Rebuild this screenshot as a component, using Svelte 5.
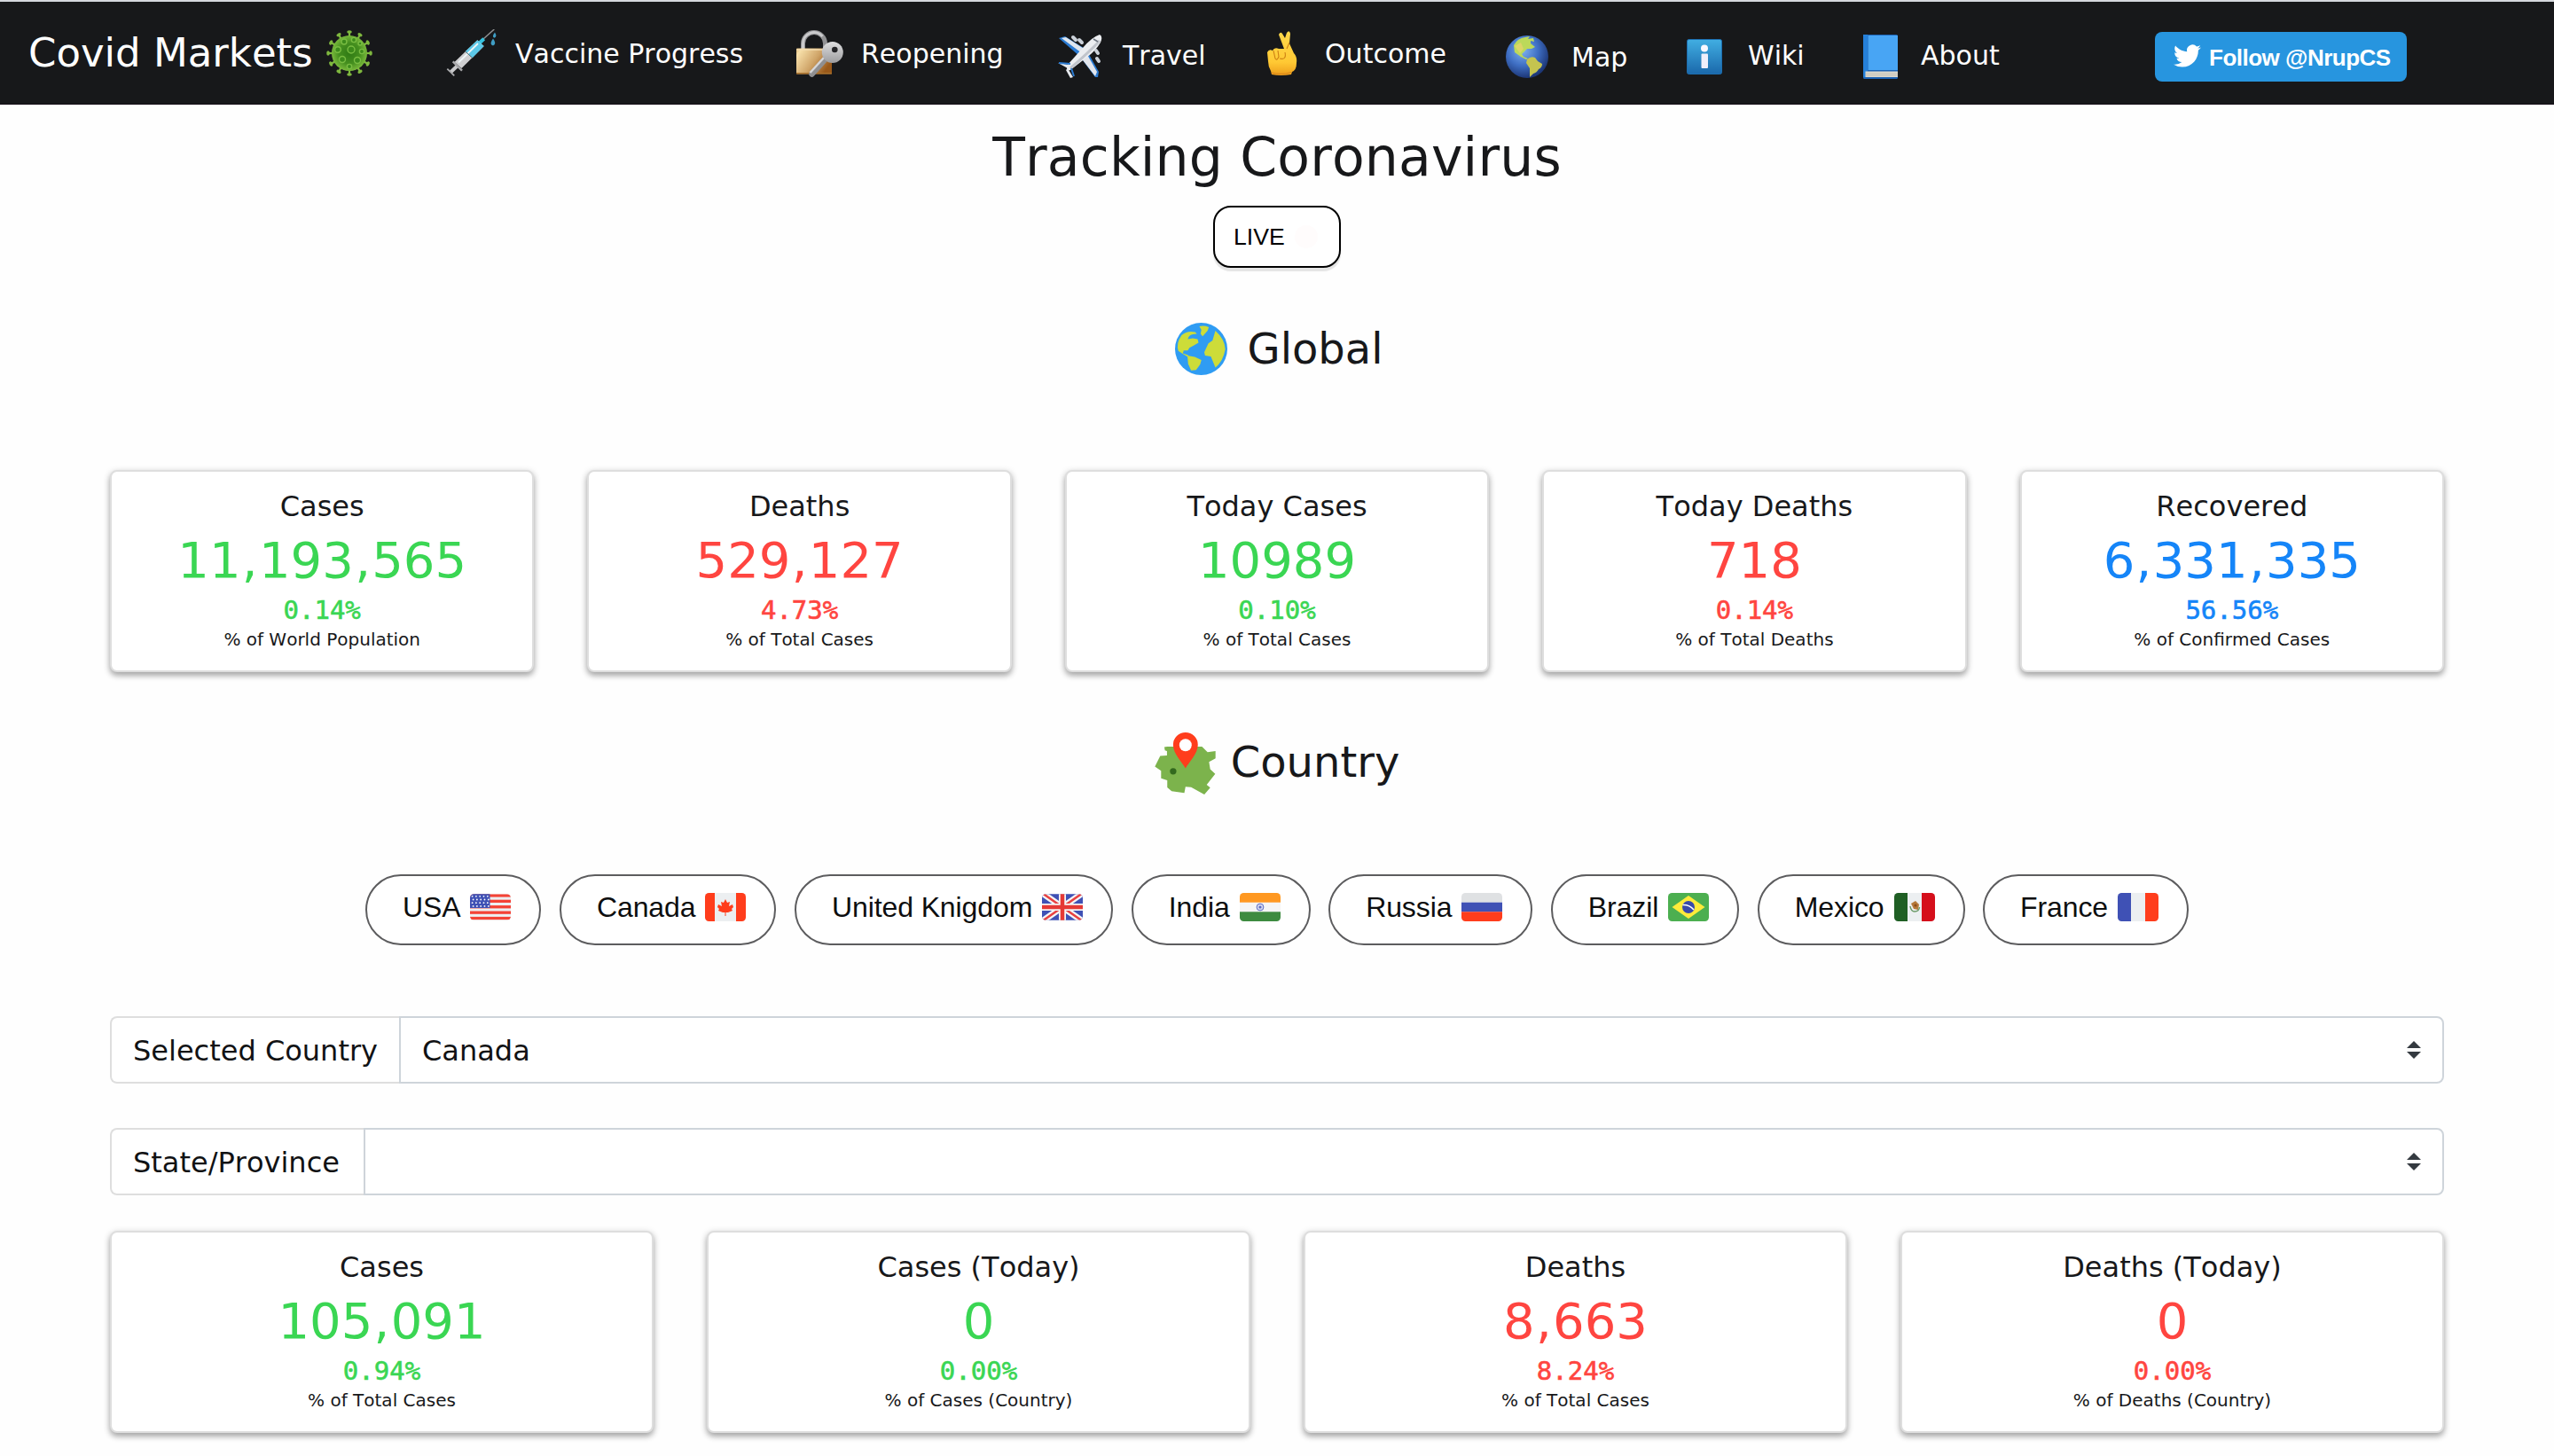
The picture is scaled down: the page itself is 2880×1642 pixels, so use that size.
<script>
  const globalStats = [
    { title: 'Cases', value: '11,193,565', pct: '0.14%', note: '% of World Population', tone: 'green' },
    { title: 'Deaths', value: '529,127', pct: '4.73%', note: '% of Total Cases', tone: 'red' },
    { title: 'Today Cases', value: '10989', pct: '0.10%', note: '% of Total Cases', tone: 'green' },
    { title: 'Today Deaths', value: '718', pct: '0.14%', note: '% of Total Deaths', tone: 'red' },
    { title: 'Recovered', value: '6,331,335', pct: '56.56%', note: '% of Confirmed Cases', tone: 'blue' }
  ];
  const countryStats = [
    { title: 'Cases', value: '105,091', pct: '0.94%', note: '% of Total Cases', tone: 'green' },
    { title: 'Cases (Today)', value: '0', pct: '0.00%', note: '% of Cases (Country)', tone: 'green' },
    { title: 'Deaths', value: '8,663', pct: '8.24%', note: '% of Total Cases', tone: 'red' },
    { title: 'Deaths (Today)', value: '0', pct: '0.00%', note: '% of Deaths (Country)', tone: 'red' }
  ];
  const countries = [
    { name: 'USA', code: 'us' },
    { name: 'Canada', code: 'ca' },
    { name: 'United Knigdom', code: 'gb' },
    { name: 'India', code: 'in' },
    { name: 'Russia', code: 'ru' },
    { name: 'Brazil', code: 'br' },
    { name: 'Mexico', code: 'mx' },
    { name: 'France', code: 'fr' }
  ];
  const nav = [
    { label: 'Vaccine Progress', id: 'vaccine' },
    { label: 'Reopening', id: 'reopening' },
    { label: 'Travel', id: 'travel' },
    { label: 'Outcome', id: 'outcome' },
    { label: 'Map', id: 'map' },
    { label: 'Wiki', id: 'wiki' },
    { label: 'About', id: 'about' }
  ];
  const spikes = Array.from({ length: 12 }, (_, i) => i * 30);
  const selects = [
    { label: 'Selected Country', value: 'Canada', id: 'nation' },
    { label: 'State/Province', value: '', id: 'state' }
  ];
</script>

{#snippet card(s)}
  <article class="card">
    <h3>{s.title}</h3>
    <div class="value {s.tone}">{#each s.value.split(',') as part, i}{#if i > 0}<span class="comma">,</span>{/if}{part}{/each}</div>
    <div class="pct {s.tone}">{s.pct}</div>
    <div class="note">{s.note}</div>
  </article>
{/snippet}

{#snippet navIcon(id)}
  {#if id === 'vaccine'}
    <svg class="icon" viewBox="0 0 57 53">
      <path d="M42 11 L54.300 0" stroke="#8f9092" stroke-width="1.500" />
      <path d="M36 17 L42.700 10.700" stroke="#35c3e0" stroke-width="4" />
      <path d="M35.300 12.300 L42.700 19 L17.500 44 L9.500 37 Z" fill="#cfcfd1" />
      <path d="M35.300 12.300 L42.700 19 L29.700 32.300 L21.700 25 Z" fill="#5cc8e8" />
      <path d="M36 16 L14 37.500" stroke="#eef5f7" stroke-width="1.800" />
      <path d="M21.700 25 L29.700 32.300" stroke="#54656b" stroke-width="1" />
      <path d="M7.700 36.300 L18 46.700" stroke="#a9a9ac" stroke-width="2.400" />
      <path d="M12 42 L5.300 48.300" stroke="#c9c9cb" stroke-width="4" />
      <path d="M1.300 44.700 L9.300 52.300" stroke="#a9a9ac" stroke-width="1.800" />
      <path d="M55 3.500 q3 5 -.5 6.200 q-3.500 -1 .5 -6.200 M53 10.500 q4.500 6 0 8 q-5 -1.500 0 -8" fill="#3f9dc4" />
    </svg>
  {:else if id === 'reopening'}
    <svg class="icon" viewBox="0 0 53 53">
      <defs>
        <linearGradient id="lockBody" x1="0" x2="1" y1="0" y2=".5">
          <stop offset="0" stop-color="#d9b26f" /><stop offset=".12" stop-color="#f7dfa9" /><stop offset=".6" stop-color="#cfa468" /><stop offset="1" stop-color="#99591a" />
        </linearGradient>
        <linearGradient id="keyHead" x1="0" x2="0" y1="0" y2="1">
          <stop offset="0" stop-color="#dededf" /><stop offset="1" stop-color="#9d9d9f" />
        </linearGradient>
      </defs>
      <path d="M7.500 24 V15 a12.500 12.500 0 0 1 25 0 V22" fill="none" stroke="#929294" stroke-width="5" />
      <path d="M7.500 24 V15 a12.500 12.500 0 0 1 22 -8" fill="none" stroke="#cacacc" stroke-width="3" />
      <rect y="20.500" width="40" height="29" rx="1" fill="url(#lockBody)" />
      <rect y="21" width="34" height="2" fill="#f3ddb0" opacity=".7" />
      <rect y="48" width="40" height="1.500" fill="#a9712c" />
      <path d="M34 31 L17.500 49.500" stroke="#8f8f91" stroke-width="6.500" stroke-linecap="round" />
      <path d="M31 31 L15.500 48" stroke="#d6d6d8" stroke-width="2.500" />
      <circle cx="40.800" cy="25" r="12" fill="url(#keyHead)" />
      <circle cx="43.300" cy="22" r="3.300" fill="#242427" />
    </svg>
  {:else if id === 'travel'}
    <svg class="icon" viewBox="0 0 50 50">
      <path d="M1 5 L8 3 L32 18 L24 25 Z" fill="#2b7bd2" />
      <path d="M4 5 L9 4 L31 18 L27 22 Z" fill="#dfe6ee" />
      <path d="M32 18 L46 43 L45 49 L42 49 L25 26 Z" fill="#2b7bd2" />
      <path d="M31 20 L44 43 L42 48 L25 26 Z" fill="#e3e6ec" />
      <path d="M47 1 Q51 3 48 10 Q42 20 32 27 L14 41 Q9 42 10 36 L28 16 Q38 4 47 1 Z" fill="#eceef1" />
      <path d="M47 8 Q37 19 14 39" stroke="#c1c5cc" stroke-width="3" fill="none" />
      <path d="M0 33 L13 35 L11 39 Z M11 39 L17 49 L14 50 L9 41 Z" fill="#e6e9ee" />
      <path d="M1 33 L14 34 M15 39 L18 48" stroke="#2b7bd2" stroke-width="2" />
      <path d="M17 4 L20 7 M24 7 L27 10 M43 19 L45 22 M44 28 L46 31" stroke="#cbd1d9" stroke-width="4" stroke-linecap="round" />
      <path d="M40 6 L45 9" stroke="#6b737e" stroke-width="1.500" />
    </svg>
  {:else if id === 'outcome'}
    <svg class="icon" viewBox="0 0 34 50">
      <defs>
        <linearGradient id="hand" x1="0" x2="0" y1="0" y2="1">
          <stop offset="0" stop-color="#ffd84a" /><stop offset=".7" stop-color="#ffc934" /><stop offset="1" stop-color="#ee9e1b" />
        </linearGradient>
      </defs>
      <path d="M13 4 Q15 0 17 3 L20 8 L22 2 Q25 -2 26 3 L25 14 L30 25 Q34 29 33 36 Q33 44 28 46 L27 49 Q15 51 5 49 L4 45 Q1 40 1 34 L0 24 Q2 20 6 22 Q8 18 13 20 L19 20 Z" fill="url(#hand)" />
      <path d="M7 22 L9 31 Q11 34 13 29 L12 22 M14 31 Q22 33 20 24 M25 13 L22 20" stroke="#cc7f12" stroke-width="1.100" fill="none" />
      <path d="M5 47 Q16 50 27 46.500" stroke="#d9851a" stroke-width="1.200" fill="none" />
    </svg>
  {:else if id === 'map'}
    <svg class="icon" viewBox="0 0 48 48">
      <defs>
        <radialGradient id="sea" cx=".4" cy=".35" r=".65">
          <stop offset="0" stop-color="#7fb1ef" /><stop offset=".55" stop-color="#3f6fc4" /><stop offset="1" stop-color="#1d3777" />
        </radialGradient>
      </defs>
      <circle cx="24" cy="24" r="24" fill="url(#sea)" />
      <path d="M9 11 Q13 3 22 2 L27 1 L25 4 L31 3 L32 7 L28 6 L28 9 L33 13 L29 15 L24 15 L20 19 L18 21 L20 24 L25 26 L23 27 L17 24 L10 19 Z" fill="#bcd95a" />
      <path d="M24 27 Q28 23 33 25 L36 29 L41 32 Q41 36 37 38 Q35 42 31 43 L27 47 L27 37 L23 31 Z" fill="#c5c44f" />
      <path d="M10 12 L17 8 L20 15 L16 20 Z" fill="#dcd568" />
    </svg>
  {:else if id === 'wiki'}
    <svg class="icon" viewBox="0 0 40 40">
      <defs>
        <linearGradient id="info" x1="0" x2="0" y1="0" y2="1">
          <stop offset="0" stop-color="#41aee2" /><stop offset="1" stop-color="#1a68ab" />
        </linearGradient>
      </defs>
      <rect x=".5" y=".5" width="39" height="39" rx="2" fill="url(#info)" stroke="#1c6eb0" />
      <circle cx="20" cy="10.500" r="4" fill="#f8f8ff" />
      <rect x="16.500" y="16.500" width="7.500" height="16.500" rx="1" fill="#efeffa" />
    </svg>
  {:else}
    <svg class="icon" viewBox="0 0 39 50">
      <rect width="39" height="50" rx="1.500" fill="#1c63b5" />
      <rect x="0" y="0" width="5" height="48" fill="#2580da" />
      <rect x="5.500" y="1" width="33.500" height="39" fill="#48a5f4" />
      <rect x="2.500" y="41.500" width="36.500" height="6.500" fill="#dcd8cc" />
      <path d="M3 44 H39 M3 46 H39" stroke="#bdb9ae" stroke-width=".6" />
    </svg>
  {/if}
{/snippet}

{#snippet flag(code)}
  <svg class="flag" viewBox="0 0 46 32">
    <defs><clipPath id="clip-{code}"><rect y={code === 'us' || code === 'gb' ? 1.3 : 0} width="46" height={code === 'us' || code === 'gb' ? 29.4 : 32} rx="4.500" /></clipPath></defs>
    <g clip-path="url(#clip-{code})">
      {#if code === 'us'}
        <rect width="46" height="32" fill="#eceff1" />
        {#each [0, 1, 2, 3, 4] as i}
          <rect y={1.3 + i * 6.4} width="46" height="3.300" fill="#f44336" />
        {/each}
        <rect width="22.500" height="17" fill="#3f51b5" />
        {#each [0, 1, 2, 3] as r}
          {#each [0, 1, 2, 3, 4] as c}
            <circle cx={2.6 + c * 4.3 + (r % 2)} cy={3.8 + r * 3.7} r=".9" fill="#fff" />
          {/each}
        {/each}
      {:else if code === 'ca'}
        <rect width="46" height="32" fill="#eceff1" />
        <rect width="11" height="32" fill="#ff3d1c" /><rect x="35" width="11" height="32" fill="#ff3d1c" />
        <path d="M23 7 L25 11 L28 10 L27 15 L31 13 L32 16 L30 18 L31 20 L26 22 L23.500 22 L23.500 26 L22.500 26 L22.500 22 L20 22 L15 20 L16 18 L14 16 L15 13 L19 15 L18 10 L21 11 Z" fill="#ff3d1c" />
      {:else if code === 'gb'}
        <rect width="46" height="32" fill="#3f51b5" />
        <path d="M0 0 L46 32 M46 0 L0 32" stroke="#f5f5f5" stroke-width="7" />
        <path d="M0 0 L46 32 M46 0 L0 32" stroke="#e84040" stroke-width="2.500" />
        <path d="M23 0 V32 M0 16 H46" stroke="#f5f5f5" stroke-width="8" />
        <path d="M23 0 V32 M0 16 H46" stroke="#e53935" stroke-width="4.500" />
      {:else if code === 'in'}
        <rect width="46" height="32" fill="#f5f5f5" />
        <rect width="46" height="10.700" fill="#ff9821" /><rect y="21.300" width="46" height="10.700" fill="#3d8b40" />
        <circle cx="23" cy="16" r="3.900" fill="#d7daf0" stroke="#5c6bc0" stroke-width="1" /><circle cx="23" cy="16" r="1.600" fill="#5c6bc0" />
      {:else if code === 'ru'}
        <rect width="46" height="10.700" fill="#dfe1e3" /><rect y="10.700" width="46" height="10.700" fill="#3f51b5" /><rect y="21.300" width="46" height="10.700" fill="#ff3d1c" />
      {:else if code === 'br'}
        <rect width="46" height="32" fill="#4caf50" />
        <path d="M23 3 L41.500 16 L23 29 L4.500 16 Z" fill="#ffeb3b" />
        <circle cx="23" cy="16" r="7" fill="#3949ab" />
        <path d="M16.500 13.500 Q24 13 29 19" fill="none" stroke="#fff" stroke-width="1.500" />
      {:else if code === 'mx'}
        <rect width="46" height="32" fill="#eceff1" />
        <rect width="15" height="32" fill="#1f5f24" /><rect x="31" width="15" height="32" fill="#d50f1b" />
        <path d="M19 12 L24 9 L28 13 L27 19 L22 18 Z" fill="#b5793a" />
        <path d="M18 15 Q19 21 23 21 Q28 21 28.500 16" fill="none" stroke="#6c9a67" stroke-width="1.500" />
        <circle cx="24" cy="14" r="1.600" fill="#8c4c1c" />
      {:else}
        <rect width="46" height="32" fill="#eceff1" />
        <rect width="15" height="32" fill="#3f51b5" /><rect x="31" width="15" height="32" fill="#ff3d1c" />
      {/if}
    </g>
  </svg>
{/snippet}

<div class="page">
  <header>
    <div class="brand">
      <span>Covid Markets</span>
      <svg class="virus" viewBox="-26 -26 52 52">
        <defs>
          <radialGradient id="virusBody"><stop offset="0" stop-color="#2f7a14" /><stop offset=".6" stop-color="#458f1f" /><stop offset="1" stop-color="#79b83c" /></radialGradient>
        </defs>
        {#each spikes as a}
          <g transform="rotate({a})">
            <path d="M0 -18 V-24" stroke="#7fb83f" stroke-width="2.200" />
            <ellipse cy="-24" rx="2.800" ry="1.800" fill="#7fb83f" />
          </g>
        {/each}
        <circle r="20" fill="url(#virusBody)" />
        <g fill="#3c8a1b" stroke="#79bd42" stroke-width="1.400">
          <circle cx="2" cy="-4" r="4" /><circle cx="-13" cy="-4" r="3.300" /><circle cx="-8" cy="7" r="3.500" />
          <circle cx="9" cy="8" r="3.500" /><circle cx="14" cy="-2" r="2.600" /><circle cx="-6" cy="-13" r="3" />
          <circle cx="5" cy="-15" r="2.600" /><circle cx="12" cy="-11" r="2" /><circle cx="0" cy="15" r="2.600" />
        </g>
      </svg>
    </div>
    <nav>
      {#each nav as item}
        <a class="item {item.id}" href="#{item.id}">{@render navIcon(item.id)}<span>{item.label}</span></a>
      {/each}
    </nav>
    <a class="follow" href="#follow">
      <svg viewBox="0 2 24 20"><path fill="#fff" d="M23.950 4.570a10 10 0 0 1-2.820.770 4.960 4.960 0 0 0 2.160-2.720c-.95.550-2 .950-3.130 1.180a4.920 4.920 0 0 0-8.380 4.480C7.690 8.100 4.070 6.130 1.640 3.160a4.820 4.820 0 0 0-.67 2.480c0 1.710.870 3.210 2.190 4.100a4.900 4.900 0 0 1-2.230-.62v.06a4.920 4.920 0 0 0 3.950 4.830 5 5 0 0 1-2.210.080 4.940 4.940 0 0 0 4.600 3.420A9.870 9.870 0 0 1 0 19.540a13.990 13.990 0 0 0 7.550 2.210c9.050 0 14-7.500 14-13.980 0-.21 0-.42-.02-.63a9.940 9.940 0 0 0 2.460-2.550z" /></svg>
      <span>Follow @NrupCS</span>
    </a>
  </header>

  <main>
    <h1>Tracking Coronavirus</h1>
    <button class="live"><span>LIVE</span><i></i></button>

    <h2 class="global">
      <svg viewBox="535 730 127 178" preserveAspectRatio="none">
        <ellipse cx="598.500" cy="819" rx="63.500" ry="89" fill="#2f9cf3" />
        <path d="M551 772 Q566 755 584 762 L588 768 Q574 768 568 778 L566 786 L578 783 L590 786 L592 798 L580 808 L570 815 L566 824 L556 824 L554 834 L567 840 L566 846 Q552 835 543 826 Q537 800 551 772 Z" fill="#cddc39" />
        <path d="M594 742 Q606 738 617 745 L614 757 L602 776 L597 768 L599 754 Z" fill="#cddc39" />
        <path d="M565 842 L583 846 L599 857 L596 872 L586 891 L574 892 L567 870 Z" fill="#cddc39" />
        <path d="M633 757 Q656 786 657 820 Q652 862 633 882 L622 845 L608 842 L606 830 L616 800 L626 790 Z" fill="#cddc39" />
      </svg>
      <span>Global</span>
    </h2>

    <section class="cards">
      {#each globalStats as s}{@render card(s)}{/each}
    </section>

    <h2 class="country">
      <svg viewBox="123 77 206 211">
        <path fill="#7cb34c" d="M155 127 L165 125 H283 L302 144 L329 140 V165 L307 177 L311 202 L328 218 L299 255 L311 265 L291 288 L246 263 L227 262 L223 283 L180 277 L165 264 V240 L144 233 V207 L123 193 L141 157 L164 155 V140 L157 138 Z" />
        <circle cx="185" cy="209" r="11" fill="#33691e" />
        <path fill="#ff3d1c" d="M227 77 a42 42 0 0 1 42 42 C269 150 238 178 227 199 C216 178 185 150 185 119 a42 42 0 0 1 42 -42 Z" />
        <circle cx="227" cy="120" r="21" fill="#fff" />
      </svg>
      <span>Country</span>
    </h2>

    <div class="pills">
      {#each countries as c}
        <button class="pill {c.code}"><span>{c.name}</span>{@render flag(c.code)}</button>
      {/each}
    </div>

    {#each selects as s}
      <div class="select {s.id}">
        <div class="label">{s.label}</div>
        <div class="field">
          <span>{s.value}</span>
          <svg viewBox="0 0 16 20"><path d="M8 0 L16 8 H0 Z M0 12 H16 L8 20 Z" fill="#343a40" /></svg>
        </div>
      </div>
    {/each}

    <section class="cards four">
      {#each countryStats as s}{@render card(s)}{/each}
    </section>
  </main>
</div>

<style>
  :global(body) { margin: 0; background: #fff; }
  .page { width: 2880px; height: 1642px; overflow: hidden; background: #fefefe; color: #17181a; font-family: "DejaVu Sans", Verdana, sans-serif; font-kerning: none; }
  .page :global(*) { box-sizing: border-box; }
  svg { display: block; flex: none; }
  span { white-space: nowrap; }

  header { display: flex; align-items: center; height: 118px; border-top: 2px solid #d5d8dd; border-bottom: 1px solid #150d16; background: #17181a; color: #fff; }
  header a { color: #fff; text-decoration: none; }
  .brand { display: flex; align-items: center; width: 503px; padding-left: 32px; font-size: 45px; line-height: 60px; }
  .brand span { width: 336px; }
  .virus { width: 52px; height: 52px; }
  nav { display: grid; grid-template-columns: 395px 295px 236px 269px 204px 199px 329px; align-items: center; }
  .item { display: flex; align-items: center; font-size: 30px; line-height: 40px; padding-top: 2px; }
  .vaccine .icon { width: 57px; height: 53px; margin: -3px 21px 0 0; }
  .reopening .icon { width: 53px; height: 53px; margin-right: 20px; }
  .travel { padding-top: 6px; }
  .travel .icon { width: 50px; height: 50px; margin-right: 23px; }
  .outcome .icon { width: 34px; height: 50px; margin: -2px 31px 0 0; }
  .map { padding-top: 10px; }
  .map .icon { width: 48px; height: 48px; margin: -2px 26px 0 0; }
  .wiki { padding-top: 6px; }
  .wiki .icon { width: 40px; height: 40px; margin: 2px 29px 0 0; }
  .about { padding-top: 6px; }
  .about .icon { width: 39px; height: 50px; margin: 2px 26px 0 0; }
  .follow { display: flex; align-items: center; width: 284px; height: 56px; margin-top: 8px; padding: 0 0 0 21px; border-radius: 8px; background: #2795df; font: bold 26px/36px "Liberation Sans", Arial, sans-serif; font-kerning: normal; letter-spacing: -.5px; }
  .follow svg { width: 31px; height: 26px; margin: -2px 9px 0 0; }
  .follow span { margin-top: 2px; }

  main { display: flex; flex-direction: column; padding: 23px 124px 0; }
  h1, h2, h3 { margin: 0; font-weight: 400; }
  h1 { font-size: 60px; line-height: 72px; letter-spacing: .15px; text-align: center; }
  .live { display: flex; align-items: center; align-self: center; width: 144px; height: 70px; margin-top: 19px; padding: 0 0 0 21px; border: 2px solid #000; border-radius: 20px; background: #fff; color: #000; box-shadow: 0 4px 1px rgba(0, 0, 0, .1); font: 26.600px/36px "Liberation Sans", Arial, sans-serif; }
  .live span { width: 69px; text-align: left; }
  .live i { width: 26px; height: 26px; border-radius: 50%; background: #fffcfc; }
  h2 { display: flex; align-items: center; justify-content: center; font-size: 48px; line-height: 60px; }
  .global { height: 60px; margin-top: 61px; padding-left: 5px; }
  .global svg { width: 59px; height: 59px; margin-right: 22px; }
  .global span { margin-bottom: 1px; }
  .cards { display: grid; grid-template-columns: repeat(5, 1fr); gap: 60px; margin-top: 107px; }
  .card { height: 228px; padding-top: 19px; border: 2px solid #dedede; border-radius: 8px; background: #fff; box-shadow: 0 2px 8px rgba(0, 0, 0, .16), 0 4px 6px rgba(0, 0, 0, .26); text-align: center; }
  h3 { font-size: 32px; line-height: 40px; }
  .value { margin-top: 7px; font-size: 56px; line-height: 67px; }
  .comma { margin: 0 1.300px; }
  .pct { margin-top: 7px; font: 29px/32px "DejaVu Sans Mono", monospace; -webkit-text-stroke: .6px currentColor; }
  .note { margin-top: 3px; font-size: 20px; line-height: 28px; }
  .green { color: #3ad653; }
  .red { color: #ff4540; }
  .blue { color: #1585f8; }
  .country { height: 70px; margin-top: 68px; }
  .country svg { width: 69px; height: 70px; margin-right: 17px; }
  .country span { margin-bottom: 5px; }
  .pills { display: flex; justify-content: center; gap: 20.500px; margin-top: 90px; }
  .pill { display: flex; align-items: center; height: 80px; padding: 0 32px 6px 40px; border: 2px solid #5c5c5e; border-radius: 40px; background: #fff; color: #0d0e0f; font: 32px/40px "Liberation Sans", Arial, sans-serif; letter-spacing: -.1px; }
  .flag { width: 46px; height: 32px; margin-left: 11px; }
  .select { display: flex; height: 76px; margin-top: 80px; font-size: 32px; line-height: 40px; color: #111214; }
  .select.state { margin-top: 50px; }
  .label { width: 326px; padding: 17px 0 0 24px; border: 2px solid #dedede; border-right: 0; border-radius: 8px 0 0 8px; white-space: nowrap; background: #fff; }
  .state .label { width: 286px; }
  .field { display: flex; flex: 1; justify-content: space-between; padding: 17px 24px 0; border: 2px solid #ced4da; border-radius: 0 8px 8px 0; background: #fff; }
  .field svg { width: 16px; height: 20px; margin-top: 9px; }
  .four { grid-template-columns: repeat(4, 1fr); margin-top: 40px; }
</style>
